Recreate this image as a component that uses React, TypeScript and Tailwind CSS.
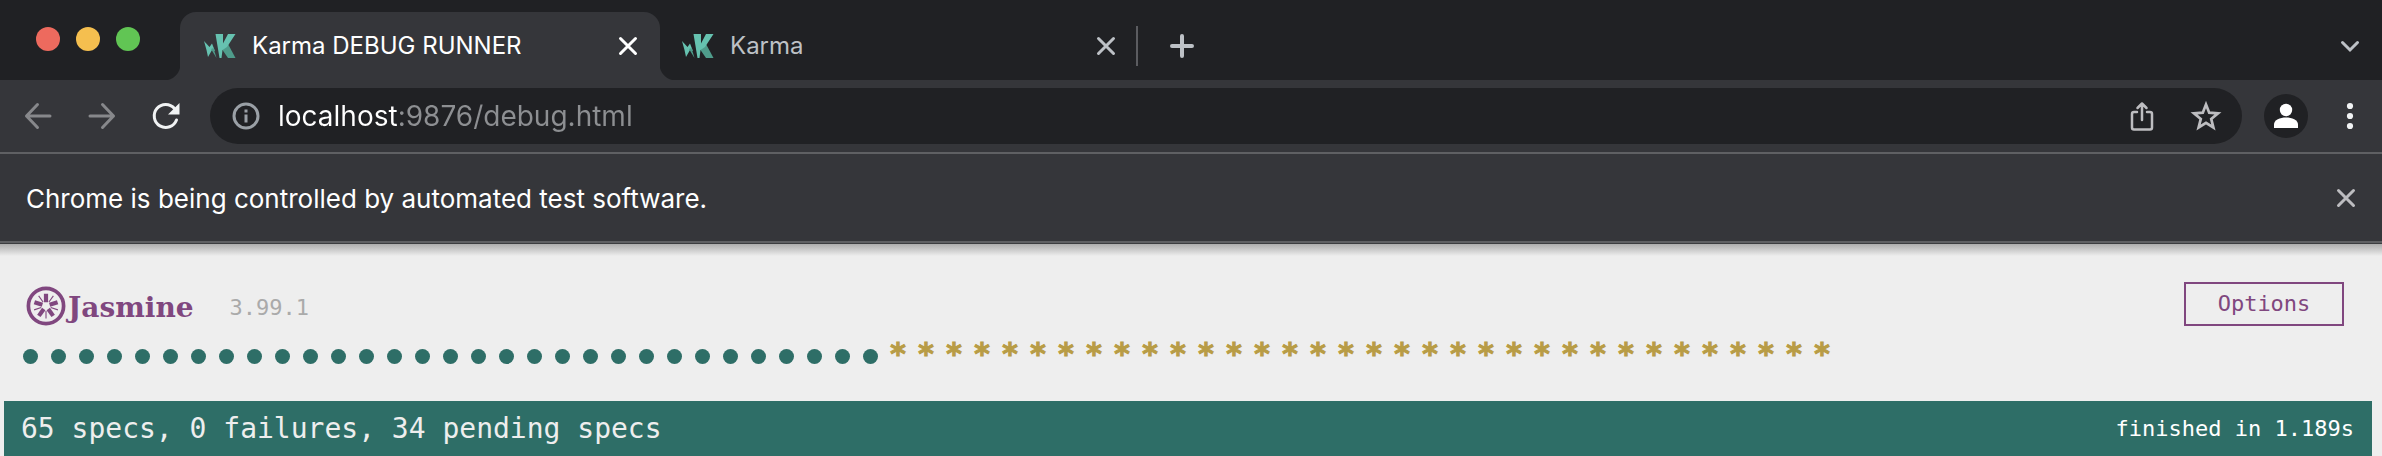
import React from "react";

const PASSED = 31;
const PENDING = 34;

function KarmaIcon() {
  return (
    <svg viewBox="0 0 32 24" className="h-6 w-8 shrink-0" aria-hidden="true">
      <path d="M17.5 14.5 24 10l7.5 14H24z" fill="#4f9c8b" />
      <path d="M11.5 0H19v9.5L24 0h7.5L23 13l-4.5 3-1 8h-2z" fill="#66c2b0" />
      <path d="M0 7l5.5 6L8 9.500 11 17l-3-1-4 7-1.500-7z" fill="#66c2b0" />
      <path d="M7 15l2.500-1L12.500 24z" fill="#4f9c8b" />
    </svg>
  );
}

function CloseIcon() {
  return (
    <svg viewBox="0 0 24 24" className="h-6 w-6" fill="none" stroke="currentColor" strokeWidth="3" strokeLinecap="round" aria-hidden="true">
      <path d="M4.500 4.500l15 15M19.500 4.500l-15 15" />
    </svg>
  );
}

function JasmineFlower() {
  return (
    <svg viewBox="0 0 40 40" className="h-10 w-10" aria-hidden="true">
      <circle cx="20" cy="20" r="17.600" fill="none" stroke="#80477f" strokeWidth="3.700" />
      {[0, 72, 144, 216, 288].map((angle) => (
        <g key={angle} transform={`rotate(${angle} 20 20)`}>
          <path d="M17.900 7.800h4.200v8.400h-4.200z" fill="#80477f" />
          <path d="M20 25v7.500" stroke="#80477f" strokeWidth="1.100" />
        </g>
      ))}
    </svg>
  );
}

function TabStrip() {
  return (
    <div className="flex h-20 items-end bg-[#202124] pl-9 pr-4">
      <div className="flex h-20 items-center gap-4 pb-0.5">
        <button aria-label="Close window" className="h-6 w-6 rounded-full bg-[#ed6a5e]" />
        <button aria-label="Minimize window" className="h-6 w-6 rounded-full bg-[#f5bf4f]" />
        <button aria-label="Zoom window" className="h-6 w-6 rounded-full bg-[#61c554]" />
      </div>
      <span className="ml-6 h-4 w-4 bg-[radial-gradient(circle_at_0_0,#202124_16px,#35363a_17px)]" />
      <div className="flex h-[68px] w-[480px] items-center rounded-t-2xl bg-[#35363a] pl-6 pr-5 text-white">
        <KarmaIcon />
        <button className="ml-4 flex-1 text-left text-2xl">Karma DEBUG RUNNER</button>
        <button aria-label="Close Karma DEBUG RUNNER">
          <CloseIcon />
        </button>
      </div>
      <span className="h-4 w-4 bg-[radial-gradient(circle_at_100%_0,#202124_16px,#35363a_17px)]" />
      <div className="flex h-[68px] w-[460px] items-center pl-1.5 pr-[18px] text-[#bdc1c6]">
        <KarmaIcon />
        <button className="ml-4 flex-1 text-left text-2xl">Karma</button>
        <button aria-label="Close Karma">
          <CloseIcon />
        </button>
      </div>
      <div className="flex h-[68px] flex-1 items-center text-[#bdc1c6]">
        <span className="h-10 w-0.5 bg-[#5b5c60]" />
        <button aria-label="New tab" className="ml-7">
          <svg viewBox="0 0 32 32" className="h-8 w-8" stroke="currentColor" strokeWidth="4" strokeLinecap="round" aria-hidden="true">
            <path d="M6 16h20M16 6v20" />
          </svg>
        </button>
        <button aria-label="Search tabs" className="ml-auto">
          <svg viewBox="0 0 32 32" className="h-8 w-8" fill="none" stroke="currentColor" strokeWidth="3" strokeLinecap="round" aria-hidden="true">
            <path d="M8.500 12.500l7.500 7.500 7.500-7.500" />
          </svg>
        </button>
      </div>
    </div>
  );
}

function Toolbar() {
  return (
    <div className="flex h-[74px] items-center border-b-2 border-[#5f6063] bg-[#35363a] pl-[22px] pr-4">
      <button aria-label="Back" className="text-[#87888b]">
        <svg viewBox="0 0 32 32" className="h-8 w-8" fill="none" stroke="currentColor" strokeWidth="3" strokeLinecap="round" strokeLinejoin="round" aria-hidden="true">
          <path d="M28 16H4.500M15.500 4.500L4.500 16l11 11.500" />
        </svg>
      </button>
      <button aria-label="Forward" className="ml-8 text-[#87888b]">
        <svg viewBox="0 0 32 32" className="h-8 w-8" fill="none" stroke="currentColor" strokeWidth="3" strokeLinecap="round" strokeLinejoin="round" aria-hidden="true">
          <path d="M4 16h23.500M16.500 4.500l11 11.500-11 11.500" />
        </svg>
      </button>
      <button aria-label="Reload" className="ml-8 text-[#f1f3f4]">
        <svg viewBox="0 0 32 32" className="h-8 w-8" fill="none" aria-hidden="true">
          <path d="M26.500 20A11.500 11.500 0 1 1 24.500 8.500" stroke="currentColor" strokeWidth="3" strokeLinecap="round" />
          <path d="M29.500 3v11.500H18z" fill="currentColor" />
        </svg>
      </button>
      <div className="ml-7 flex h-14 flex-1 items-center rounded-full bg-[#202124] pl-5 pr-5 text-[#9aa0a6]">
        <button aria-label="View site information">
          <svg viewBox="0 0 32 32" className="h-8 w-8" fill="none" aria-hidden="true">
            <circle cx="16" cy="16" r="12" stroke="currentColor" strokeWidth="3" />
            <path d="M14.500 9.500h3v3h-3zM14.500 14.500h3v8h-3z" fill="currentColor" />
          </svg>
        </button>
        <input
          aria-label="Address"
          defaultValue="localhost:9876/debug.html"
          className="ml-4 flex-1 bg-[linear-gradient(to_right,#ffffff_121px,#8d8f92_121px)] bg-clip-text text-[28px] leading-8 text-transparent outline-none"
        />
        <button aria-label="Share" className="text-[#bdbdc0]">
          <svg viewBox="0 0 32 32" className="h-8 w-8" fill="none" stroke="currentColor" strokeWidth="2.500" strokeLinecap="round" strokeLinejoin="round" aria-hidden="true">
            <path d="M11 12H8a2 2 0 0 0-2 2v13.500a2 2 0 0 0 2 2h16a2 2 0 0 0 2-2V14a2 2 0 0 0-2-2h-3M16 20V3.500M11.500 8L16 3.500 20.500 8" />
          </svg>
        </button>
        <button aria-label="Bookmark this tab" className="ml-8 text-[#bdbdc0]">
          <svg viewBox="0 0 32 32" className="h-8 w-8" fill="none" stroke="currentColor" strokeWidth="2.700" aria-hidden="true">
            <path d="M16 4.500l3.200 8.200 8.800.6-6.800 5.600 2.200 8.600L16 22.800l-7.400 4.700 2.200-8.600L4 13.300l8.800-.6z" />
          </svg>
        </button>
      </div>
      <button aria-label="Profile" className="ml-[22px] rounded-full bg-[#202124] text-white">
        <svg viewBox="0 0 44 44" className="h-11 w-11" fill="currentColor" aria-hidden="true">
          <circle cx="22" cy="16" r="6.200" />
          <path d="M10 34v-3.500c0-4.500 6-7 12-7s12 2.500 12 7V34z" />
        </svg>
      </button>
      <button aria-label="Browser menu" className="ml-[26px] text-[#f1f3f4]">
        <svg viewBox="0 0 32 32" className="h-8 w-8" fill="currentColor" aria-hidden="true">
          <circle cx="16" cy="6" r="3.100" />
          <circle cx="16" cy="16" r="3.100" />
          <circle cx="16" cy="26" r="3.100" />
        </svg>
      </button>
    </div>
  );
}

function InfoBar() {
  return (
    <div className="flex h-[89px] items-center justify-between border-b-2 border-[#5f6063] bg-[#35363a] pl-[26px] pr-6 text-white">
      <p className="pt-0.5 text-[26px] leading-8">Chrome is being controlled by automated test software.</p>
      <button aria-label="Dismiss" className="text-[#bdbdc0]">
        <CloseIcon />
      </button>
    </div>
  );
}

function Report() {
  return (
    <main className="bg-[#eeeeee] pl-1 pr-2.5 font-['DejaVu_Sans_Mono','Liberation_Mono',monospace]">
      <div className="-ml-1 -mr-2.5 h-[13px] border-t border-[#3c3d40] bg-linear-to-b from-[#adadad] to-[#eeeeee]" />
      <div className="flex items-start justify-between pl-[22px] pr-7 pt-[26px]">
        <div className="flex items-center pt-1">
          <JasmineFlower />
          <div className="ml-0.5 flex items-center gap-9 pt-1">
            <span className="font-['DejaVu_Serif',serif] text-[28px] leading-8 font-bold text-[#80477f]">Jasmine</span>
            <span className="text-[22px] leading-8 text-[#aaaaaa]">3.99.1</span>
          </div>
        </div>
        <button className="h-11 w-40 border-2 border-[#80477f] text-[22px] leading-8 text-[#80477f]">Options</button>
      </div>
      <ul className="flex h-[75px] pl-3 pt-1.5">
        {Array.from({ length: PASSED }, (_, i) => (
          <li key={`passed-${i}`} className="flex h-10 w-7 items-center justify-center">
            <span className="mt-2 h-[15px] w-[15px] rounded-full bg-[#2e6e67]" />
          </li>
        ))}
        {Array.from({ length: PENDING }, (_, i) => (
          <li
            key={`pending-${i}`}
            className="h-10 w-7 text-center text-[30px] leading-[44px] font-bold text-[#b89c45] [-webkit-text-stroke:1px_#b89c45]"
          >
            *
          </li>
        ))}
      </ul>
      <div className="flex h-14 items-center justify-between bg-[#2e6e67] pl-[17px] pr-[18px] text-[#eeeeee]">
        <span className="text-[28px] leading-10">65 specs, 0 failures, 34 pending specs</span>
        <span className="text-[22px] leading-8 text-white">finished in 1.189s</span>
      </div>
    </main>
  );
}

export default function App() {
  return (
    <div className="h-screen overflow-hidden bg-[#eeeeee] font-['Inter','Roboto',sans-serif]">
      <TabStrip />
      <Toolbar />
      <InfoBar />
      <Report />
    </div>
  );
}
